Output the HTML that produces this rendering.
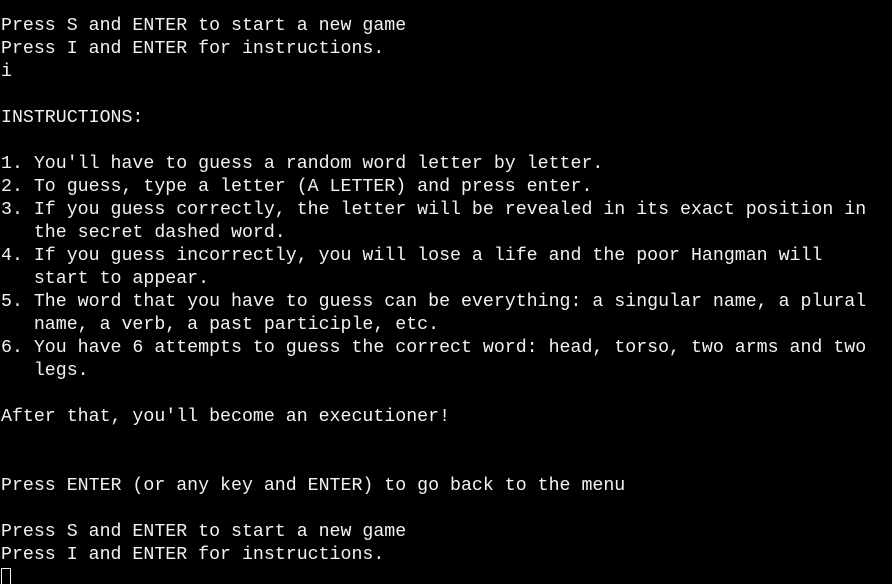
<!DOCTYPE html>
<html><head><style>
html,body{margin:0;background:#000;width:892px;height:584px;overflow:hidden}
pre{margin:0;padding:15px 0 0 1px;font-family:"Liberation Mono",monospace;font-size:18.25px;line-height:23px;color:#f2f2f2;white-space:pre}
.c{display:inline-block;width:10px;height:19px;border:1px solid #f2f2f2;box-sizing:border-box;vertical-align:-5px}
</style></head><body><pre>Press S and ENTER to start a new game
Press I and ENTER for instructions.
i

INSTRUCTIONS:

1. You'll have to guess a random word letter by letter.
2. To guess, type a letter (A LETTER) and press enter.
3. If you guess correctly, the letter will be revealed in its exact position in
   the secret dashed word.
4. If you guess incorrectly, you will lose a life and the poor Hangman will
   start to appear.
5. The word that you have to guess can be everything: a singular name, a plural
   name, a verb, a past participle, etc.
6. You have 6 attempts to guess the correct word: head, torso, two arms and two
   legs.

After that, you'll become an executioner!


Press ENTER (or any key and ENTER) to go back to the menu

Press S and ENTER to start a new game
Press I and ENTER for instructions.
<span class="c"></span></pre></body></html>
